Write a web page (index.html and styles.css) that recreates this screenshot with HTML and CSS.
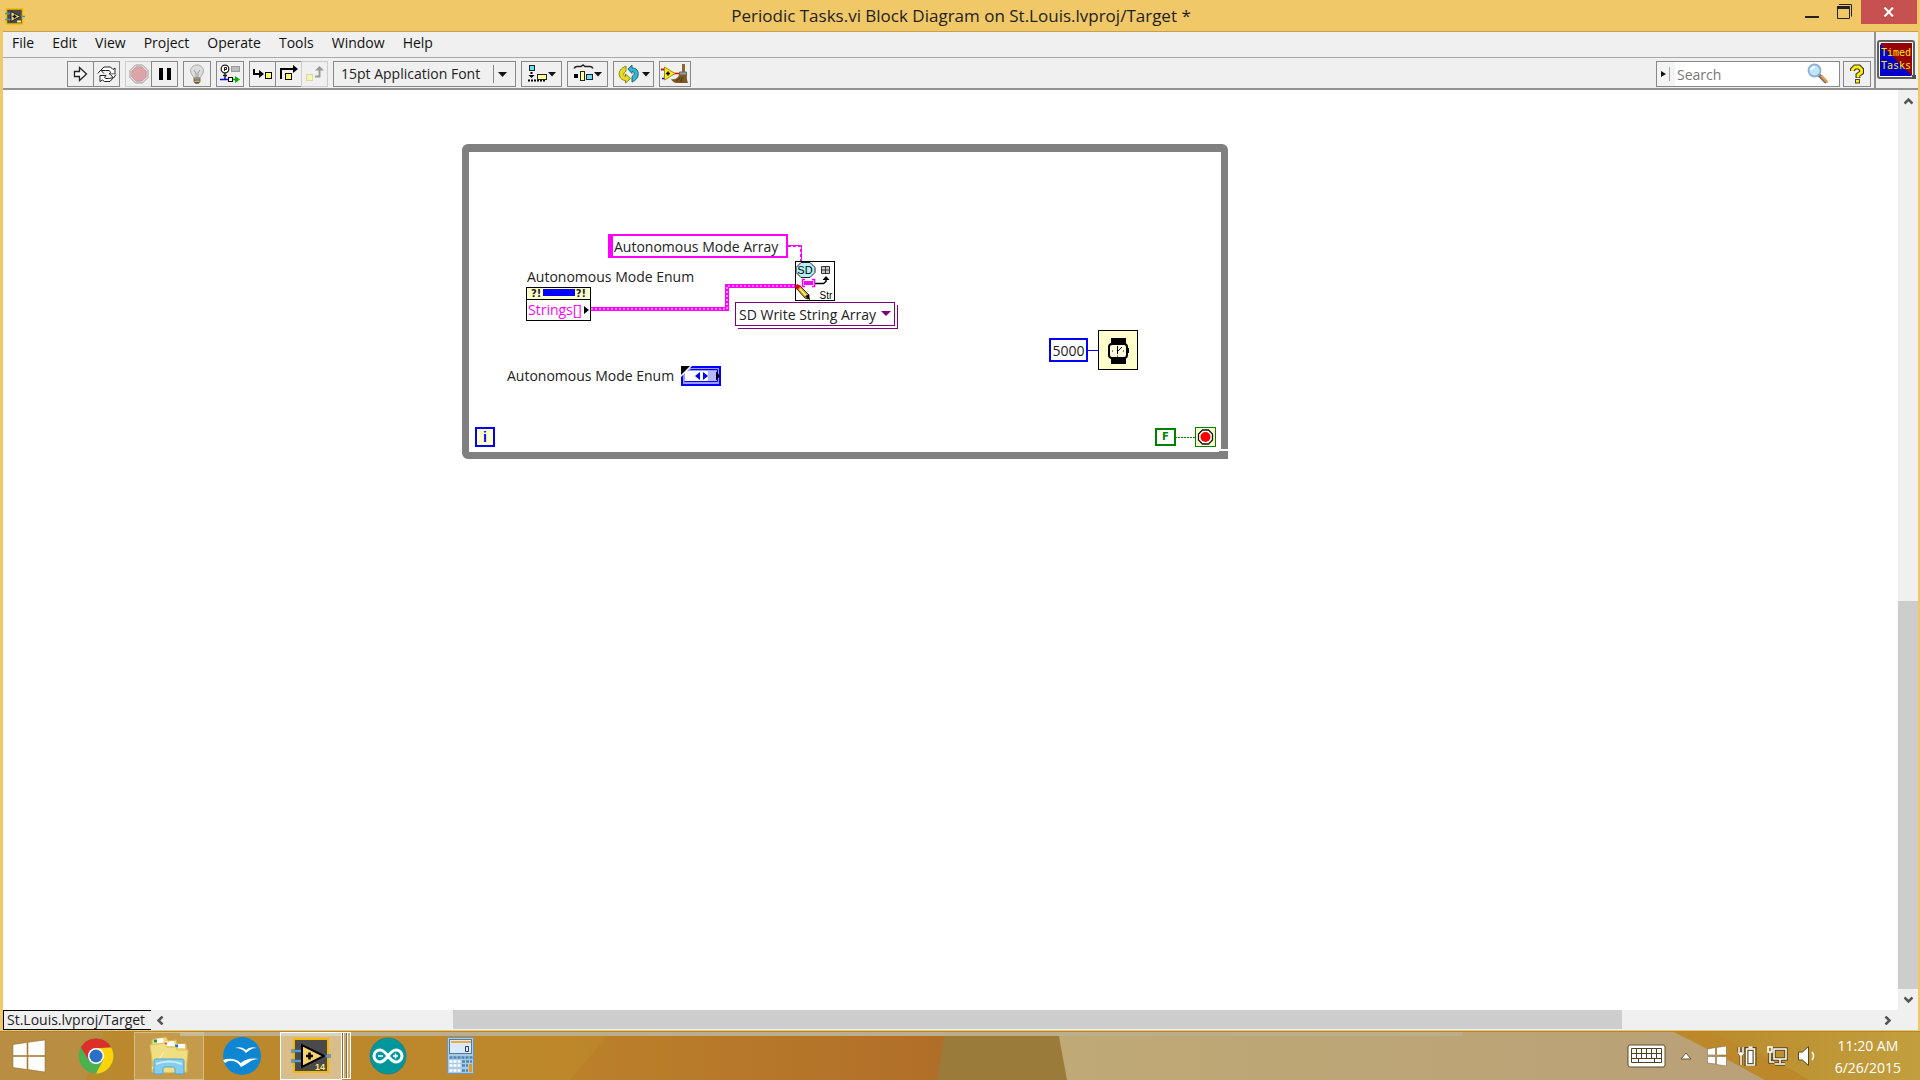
FILE: index.html
```html
<!DOCTYPE html>
<html lang="en">

<head>
    <meta charset="UTF-8">
    <meta name="viewport" content="width=device-width, initial-scale=1.0">
    <title>Periodic Tasks.vi Block Diagram</title>
    <link rel="stylesheet" href="styles.css">
</head>

<body>
    <div class="window">
        <header class="titlebar">
            <svg class="app-icon" width="20" height="18" viewBox="0 0 20 18">
                <rect x="1.5" y="1" width="16" height="15" fill="#4a4a44" stroke="#f5b800" stroke-width="1.5" />
                <path d="M0 5.500h6M0 11.500h6M15 8.500h5" stroke="#4f93b8" stroke-width="1.500" />
                <path d="M6 3.500v10l9.500-5z" fill="#f8d878" stroke="#222" />
                <path d="M7.500 8.500h4M9.500 6.500v4" stroke="#111" stroke-width="1.500" />
                <path d="M12 13.500h4" stroke="#ffe9a0" stroke-width="2" />
            </svg>
            <h1>Periodic Tasks.vi Block Diagram on St.Louis.lvproj/Target *</h1>
            <div class="window-buttons">
                <button type="button" aria-label="Minimize">
                    <svg width="14" height="20"><path d="M0 17h14" stroke="#222" stroke-width="2" /></svg>
                </button>
                <button type="button" aria-label="Restore">
                    <svg width="15" height="20" fill="none" stroke="#222"><path d="M2 4.500h12.500v12" /><path d="M.500 8v10.500h12V8" /><path d="M0 7.500h13" stroke-width="3" /></svg>
                </button>
                <button type="button" class="close" aria-label="Close">
                    <svg width="12" height="10"><path d="M1.500.500l8.500 9M10 .500l-8.500 9" stroke="#fff" stroke-width="2" /></svg>
                </button>
            </div>
        </header>

        <div class="frame">
            <div class="top">
                <div class="bars">
                    <nav class="menubar">
                        <a href="#">File</a>
                        <a href="#">Edit</a>
                        <a href="#">View</a>
                        <a href="#">Project</a>
                        <a href="#">Operate</a>
                        <a href="#">Tools</a>
                        <a href="#">Window</a>
                        <a href="#">Help</a>
                    </nav>

                    <div class="toolbar">
                        <div class="group">
                            <button type="button" class="tool" aria-label="Run">
                                <svg width="16" height="18"><path d="M1.500 6.500h5V2.500l7 6.500-7 6.500v-4h-5z" fill="#fff" stroke="#222" stroke-width="1.300" /></svg>
                            </button>
                            <button type="button" class="tool" aria-label="Run continuously">
                                <svg width="20" height="18" fill="#fff" stroke="#222"><path d="M3.500 5.500L7 2h6.500L16 4.500 18 3v6h-6l1.800-1.800L12 5.500H8.500z" /><path d="M16.500 12.500L13 16.500H7.500L5.500 15 3 16.500v-6h6l-1.500 2 1.500 1h3.500z" /><path d="M.800 8.500L3.800 5l3 3.500M19 9.500l-2.500 3.500-3-3.500" /></svg>
                            </button>
                        </div>
                        <div class="group">
                            <button type="button" class="tool off" aria-label="Abort execution" disabled>
                                <svg width="20" height="20"><path d="M6.500 1h7L19 6.500v7L13.500 19h-7L1 13.500v-7z" fill="#eee" stroke="#999" /><path d="M7 2.800h6L17.200 7v6L13 17.200H7L2.800 13V7z" fill="#dda3a6" stroke="#c79b9d" /></svg>
                            </button>
                            <button type="button" class="tool" aria-label="Pause">
                                <svg width="12" height="14"><path d="M0 1h4v12H0zM8 1h4v12H8z" fill="#000" /></svg>
                            </button>
                        </div>
                        <button type="button" class="tool" aria-label="Highlight execution">
                            <svg width="16" height="20"><path d="M8 1c4 0 6.500 2.700 6.500 6 0 3-2.500 4.500-3.500 7H5C4 11.500 1.500 10 1.500 7 1.500 3.700 4 1 8 1z" fill="#ddd" stroke="#aaa" /><path d="M5 6l2 3v5M11 6L9 9v5" fill="none" stroke="#999" /><path d="M5 14h6v4l-1.500 1.500h-3L5 18z" fill="#d9b660" stroke="#777" /><path d="M5 16h6M6 18.500h4" stroke="#555" /></svg>
                        </button>
                        <button type="button" class="tool" aria-label="Retain wire values">
                            <svg width="20" height="20"><circle cx="5" cy="5" r="3.800" fill="#fff" stroke="#222" stroke-width="1.300" /><path d="M4.500 7V3.500h2v2h-2" fill="none" stroke="#222" /><path d="M5 9v6M3 11.500h4" stroke="#222" stroke-width="1.500" /><rect x="11.500" y="2.500" width="8" height="5" fill="#bbb" stroke="#999" /><path d="M0 15.500h8" stroke="#00f" stroke-width="1.500" /><path d="M12 15.500h4" stroke="#00a000" stroke-width="1.500" /><rect x="8.500" y="13.500" width="4" height="4" fill="#fff" stroke="#000" /><path d="M15 12l5 3.500-5 3.500z" fill="#00b400" /></svg>
                        </button>
                        <div class="group">
                            <button type="button" class="tool" aria-label="Step into">
                                <svg width="20" height="18"><path d="M1 4v5h6" fill="none" stroke="#000" stroke-width="2" /><path d="M6 5l5 4-5 4z" /><rect x="12.500" y="7.500" width="6" height="6" fill="#ffff66" stroke="#000" /></svg>
                            </button>
                            <button type="button" class="tool" aria-label="Step over">
                                <svg width="20" height="18"><path d="M2 14V4h13" fill="none" stroke="#000" stroke-width="2" /><path d="M14 0l5 4-5 4z" /><rect x="6.500" y="8.500" width="6" height="6" fill="#ffff66" stroke="#000" /></svg>
                            </button>
                            <button type="button" class="tool off" aria-label="Step out" disabled>
                                <svg width="20" height="18"><rect x="1.500" y="9.500" width="6" height="6" fill="#f5f5b4" stroke="#ddd8a0" /><path d="M10 11.500h4.500V4" fill="none" stroke="#999" stroke-width="2" /><path d="M10 5.500L14.500 1 19 5.500z" fill="#999" /></svg>
                            </button>
                        </div>
                        <div class="font-picker">
                            <select aria-label="Text settings">
                                <option>15pt Application Font</option>
                            </select>
                            <svg class="arrow" width="16" height="18"><path d="M.500 0v18" stroke="#888" /><path d="M5 7h9l-4.500 5z" fill="#111" /></svg>
                        </div>
                        <button type="button" class="tool wide" aria-label="Align objects">
                            <svg width="30" height="20"><rect x="2.500" y="1.500" width="5" height="5" fill="#66e0ff" stroke="#222" /><path d="M4.500 8v5M1 16.500h17" stroke="#000" stroke-width="2" stroke-dasharray="2 1" /><path d="M1.500 11h6l-3 3z" /><rect x="10.500" y="10.500" width="9" height="5" fill="#ffff99" stroke="#222" /><path d="M21 8h8l-4 4.500z" fill="#111" /></svg>
                        </button>
                        <button type="button" class="tool wide" aria-label="Distribute objects">
                            <svg width="30" height="20"><path d="M1 4.500q1-2 3-2h4l2-1.500 2 1.500h5q2 0 3 2" fill="none" stroke="#222" stroke-width="1.500" /><path d="M1 10h4v4H1z" /><rect x="7.500" y="7.500" width="4" height="9" fill="#ffff99" stroke="#222" /><rect x="13.500" y="10.500" width="6" height="5" fill="#66e0ff" stroke="#222" /><path d="M21 8h8l-4 4.500z" fill="#111" /></svg>
                        </button>
                        <button type="button" class="tool wide reorder" aria-label="Reorder">
                            <svg width="32" height="20"><path d="M8 2C3 4 0 8 1.500 12c1 3 3.500 4.500 6 4.500V19l5-4.500-5-4.500v2.500C5 12 5 9 8 7z" fill="#e6dc22" stroke="#8c8514" /><path d="M14 18c4-1.500 7-5 6-10-.800-3-3-4-6-4V1L10 5l4 4.500V7.500c3 0 3 3 0 5z" fill="#35b5cf" stroke="#17697b" /><path d="M24 8h8l-4 4.500z" fill="#111" /></svg>
                        </button>
                        <button type="button" class="tool cleanup" aria-label="Clean up diagram">
                            <svg width="28" height="20"><path d="M0 5.500h4M1 14.500h3" stroke="#00f" stroke-width="1.500" /><path d="M0 5.500h3M13 9.500h5" stroke="#e00" stroke-width="1.500" /><path d="M3.500 3v13L14 9.500z" fill="#ffec20" stroke="#a09000" /><path d="M5 9.500h4M7 7.500v4" stroke="#000" stroke-width="1.500" /><path d="M21 0h3v8h-3z" fill="#8a6a2c" /><path d="M18.500 8h7v3h-7z" fill="#999" stroke="#666" /><path d="M18 11h8c-.500 3 0 5 1 8H16c-3 0-5-2-6-4 4 1 7-1 8-4z" fill="#7d5a1f" /><path d="M15 17l4-3M20 18l1-5" stroke="#4a330f" /></svg>
                        </button>

                        <div class="search">
                            <svg width="16" height="18"><path d="M4 6v6l5-3z" fill="#111" /><path d="M12.500 2v14" stroke="#aaa" /></svg>
                            <input type="search" placeholder="Search" aria-label="Search">
                            <svg width="22" height="22"><path d="M12 12l7.500 7.500" stroke="#6d6d78" stroke-width="3.500" /><path d="M14 12.500l6.500 7" stroke="#e6994a" stroke-width="2.500" /><circle cx="7.500" cy="7.500" r="6" fill="#bfe6f8" stroke="#8fb0d2" stroke-width="1.800" /><path d="M4 7q1-3 4-3" fill="none" stroke="#fff" stroke-width="2" /></svg>
                        </div>
                        <button type="button" class="tool help" aria-label="Context help">
                            <svg width="16" height="20" fill="none"><path d="M3.500 7V5.500L6 3h4l2.500 2.500v3L9 11v3" stroke="#333" stroke-width="5" /><path d="M3.500 7V5.500L6 3h4l2.500 2.500v3L9 11v2.500" stroke="#fff000" stroke-width="2.800" /><rect x="6.500" y="15.500" width="4" height="3.500" fill="#fff000" stroke="#444" /></svg>
                        </button>
                    </div>
                </div>

                <div class="vi-icon">
                    <svg width="39" height="40">
                        <rect x="1" y="1" width="36" height="37" rx="2" fill="#fff" stroke="#606060" stroke-width="2" />
                        <path d="M4 3h31v32H4z" fill="#960000" />
                        <path d="M3 4l32 32H3z" fill="#0000cd" />
                        <text x="19" y="16">Timed</text>
                        <text x="19" y="29">Tasks</text>
                        <path d="M35 35h4v4h-4z" fill="#505050" />
                    </svg>
                </div>
            </div>

            <div class="work">
                <main class="canvas">
                    <section class="loop">
                        <svg class="wires" width="752" height="300" fill="none">
                            <path d="M319 93.500h13.500V109" stroke="#f0f" />
                            <path d="M319 94.500h12.500V109" stroke="#f0f" stroke-dasharray="3 2" />
                            <path d="M121 157h137v-23h71" stroke="#f0f" stroke-width="4" />
                            <path d="M122 157h136v-23h70" stroke="#fff" stroke-width="1" stroke-dasharray="2 2" />
                            <path d="M619 198.500h10" stroke="#00f" stroke-width="1" />
                            <path d="M706 285.500h20" stroke="#008000" stroke-dasharray="2 1" />
                        </svg>

                        <input class="node string-const" value="Autonomous Mode Array" aria-label="String constant">

                        <div class="node property">
                            <span class="caption">Autonomous Mode Enum</span>
                            <div class="property-box">
                                <div class="property-head"><b>?!</b><i></i><b>?!</b></div>
                                <div class="property-item">Strings[]<svg width="5" height="8"><path d="M0 0v8l5-4z" /></svg></div>
                            </div>
                        </div>

                        <svg class="node sd-icon" width="40" height="40">
                            <rect x=".500" y=".500" width="39" height="39" fill="#fff" stroke="#000" />
                            <path d="M6 1.500h9l5 5v5l-5 5H6l-5-5v-5z" fill="#b5f0f8" stroke="#222" />
                            <text x="10" y="13" text-anchor="middle" class="sd">SD</text>
                            <path d="M26.500 5.500h8v7h-8zM30.500 5v8M26 9h9" fill="#ccc" stroke="#333" />
                            <path d="M10 18.500H7.500v7H10M17 18.500h2.500v7H17" fill="none" stroke="#f0f" stroke-width="1.500" />
                            <path d="M9 20h9v4H9z" fill="#f0f" />
                            <path d="M20 22.500h8.500l2.500-2v-3" fill="none" stroke="#000" stroke-width="1.500" />
                            <path d="M27.500 19l3.500-4 3.500 4z" />
                            <path d="M5 25l9 9-1 4-3-1-8-9z" fill="#d8a820" stroke="#3a2400" />
                            <path d="M5 28l7 8" stroke="#fff080" stroke-width="1.500" />
                            <path d="M2 23l4 2-4 4-2-3z" fill="#e00000" />
                            <path d="M10 35l5 4.500-1-6z" />
                            <text x="31" y="38" text-anchor="middle" class="str">Str</text>
                        </svg>

                        <div class="node selector">
                            <select aria-label="Polymorphic instance">
                                <option>SD Write String Array</option>
                            </select>
                            <svg class="arrow" width="10" height="6"><path d="M0 0h10L5 5z" fill="#800080" /></svg>
                        </div>

                        <div class="node enum">
                            <span class="caption">Autonomous Mode Enum</span>
                            <svg width="40" height="20">
                                <path d="M1 1h38v18H1z" fill="#9a9aff" stroke="#00f" stroke-width="2" />
                                <path d="M4 5h23v10H4z" fill="#fff" />
                                <path d="M3.500 15.500h33v-12h-27" fill="none" stroke="#00f" />
                                <path d="M27 5h8v10h-8z" fill="#b8b8ff" />
                                <path d="M19 6v8l-5-4zM22 6v8l5-4z" fill="#00f" />
                                <path d="M35 5.500v9l4-4.500z" />
                                <path d="M0 0h11L0 11z" fill="#fff" />
                                <path d="M0 0h9L0 9z" />
                            </svg>
                        </div>

                        <div class="node iteration">i</div>

                        <input class="node number-const" value="5000" aria-label="Milliseconds">
                        <svg class="node timer" width="40" height="40">
                            <rect x=".500" y=".500" width="39" height="39" fill="#ffffcc" stroke="#000" />
                            <path d="M13 8h15v6H13zM13 28h15v6H13z" />
                            <rect x="11" y="14" width="18" height="14" rx="3" fill="#ffffe0" stroke="#000" stroke-width="2" />
                            <path d="M29 18h2v5h-2z" />
                            <path d="M19.500 16v8M20 21l4-4" stroke="#000" />
                            <path d="M14 21h1M25 21h1M19 26h1" stroke="#000" stroke-width="1" />
                        </svg>

                        <button type="button" class="node false-const">F</button>
                        <svg class="node stop" width="21" height="20">
                            <rect x=".500" y=".500" width="20" height="19" fill="#ffffcc" stroke="#008000" />
                            <path d="M7.500 3h6l4 4v6l-4 4h-6l-4-4V7z" fill="#fff" stroke="#111" stroke-width="1.300" />
                            <circle cx="10.500" cy="10" r="5" fill="#f00" />
                        </svg>
                        <span class="resize"></span>
                    </section>
                </main>
                <div class="vscroll">
                    <svg width="9" height="8"><path d="M.500 6.500l4-4 4 4" fill="none" stroke="#555" stroke-width="2.500" /></svg>
                    <div class="vtrack"><div class="vthumb"></div></div>
                    <svg width="9" height="8"><path d="M.500 1.500l4 4 4-4" fill="none" stroke="#555" stroke-width="2.500" /></svg>
                </div>
            </div>

            <div class="bottom">
                <button type="button" class="target">St.Louis.lvproj/Target</button>
                <div class="hscroll">
                    <svg width="8" height="9"><path d="M6.500.500l-4 4 4 4" fill="none" stroke="#555" stroke-width="2.500" /></svg>
                    <div class="htrack"><div class="hthumb"></div></div>
                    <svg width="8" height="9"><path d="M1.500.500l4 4-4 4" fill="none" stroke="#555" stroke-width="2.500" /></svg>
                </div>
            </div>
        </div>
    </div>

    <footer class="taskbar">
        <svg class="wallpaper" viewBox="0 0 1920 49" preserveAspectRatio="none">
            <defs>
                <linearGradient id="sand"><stop offset="0" stop-color="#b98a2e" /><stop offset=".600" stop-color="#bd872a" /><stop offset="1" stop-color="#ad6c28" /></linearGradient>
                <linearGradient id="pale"><stop offset="0" stop-color="#bfa975" /><stop offset="1" stop-color="#b9a078" /></linearGradient>
                <linearGradient id="gold"><stop offset="0" stop-color="#b8882a" /><stop offset="1" stop-color="#c29f3e" /></linearGradient>
            </defs>
            <path d="M0 0h945v49H0z" fill="url(#sand)" />
            <path d="M0 0h104L86 49H0z" fill="#b98e42" />
            <path d="M612 0h334v49H570z" fill="#b8752a" opacity=".300" />
            <path d="M945 0h114l9 49H937z" fill="#9b7b3a" />
            <path d="M1058 0h655l80 49H1067z" fill="url(#pale)" />
            <path d="M1672 0h248v49h-155q-50-28-93-49z" fill="url(#gold)" />
            <path d="M1672 0h32q70 26 105 49h-44q-50-28-93-49z" fill="#bd8829" />
            <path d="M180 0h1282v5H180z" fill="#bcae8c" />
            <path d="M0 .500h1920" stroke="#a8873e" />
        </svg>

        <nav class="apps">
            <button type="button" class="app start" aria-label="Start">
                <svg width="34" height="34" fill="#fff" stroke="#8a6420" stroke-width=".500"><path d="M1 5.500l14-2v13H1zM16 3.300L33 1v15.500H16zM1 17.500h14v13l-14-2zM16 17.500h17V33l-17-2.500z" /></svg>
            </button>
            <button type="button" class="app" aria-label="Chrome">
                <svg width="36" height="36">
                    <circle cx="18" cy="18" r="17.500" fill="#4caf50" />
                    <path d="M2.800 9.300A17.500 17.500 0 0 1 33.200 9.500L18 10.500l-7.500 11z" fill="#dc2f28" />
                    <path d="M33.200 9.500A17.500 17.500 0 0 1 18 35.500l7.500-14L18 10.300z" fill="#fdd20a" />
                    <circle cx="18" cy="18" r="8" fill="#fff" />
                    <circle cx="18" cy="18" r="6.500" fill="#2a6fc4" />
                </svg>
            </button>
            <button type="button" class="app open" aria-label="File Explorer">
                <svg width="40" height="40">
                    <path d="M3 4l14-3 2 4 8-1 1 4h9l1 28H3z" fill="#efd978" stroke="#d8b850" />
                    <path d="M5 3l9-1 1 5H5zM15 6l10-1 1 5H15zM26 8h10v4H26z" fill="#fff" />
                    <path d="M5 3.500h3v3H5z" fill="#169b3b" /><path d="M15 6.500h3v2h-3z" fill="#e64a19" /><path d="M26 8.500h3v3h-3z" fill="#1976d2" />
                    <path d="M1 9l14-2 3 4h9l1 3h11l-2 22-32 1z" fill="#f0df82" stroke="#dcc25a" />
                    <path d="M3 33L15 16M6 25h12" stroke="#fff8c8" stroke-width="1" />
                    <path d="M5 38V25q0-2 2-2h26q2 0 2 2v13h-9v-5q0-2-2-2h-8q-2 0-2 2v5z" fill="#84cdee" stroke="#55a5cf" />
                    <path d="M7 28q13-5 26 0" fill="none" stroke="#c9ecfb" stroke-width="2" />
                </svg>
            </button>
            <button type="button" class="app" aria-label="OpenOffice">
                <svg width="38" height="38">
                    <circle cx="19" cy="19" r="19" fill="#0f86d2" />
                    <path d="M12 11q7-2 11 2 4-4 11-2-5 0-7 2-2 1-4 3-4-5-11-5zM0 23q5-2 10-1 5 1 8 4 6-6 18-4-7 0-11 4-3 2-7 4-3-5-8-6-4-1-8 2z" fill="#fff" />
                </svg>
            </button>
            <button type="button" class="app active" aria-label="LabVIEW">
                <svg width="40" height="36">
                    <rect x="3" y="1" width="34" height="33" fill="#4a4a4a" stroke="#f5b800" stroke-width="2" />
                    <path d="M0 13h11M0 23h11M33 18h7" stroke="#2e6f9e" stroke-width="3" /><path d="M0 13h11M0 23h11M33 18h7" stroke="#8cc4e4" />
                    <path d="M11 7v22l22-11z" fill="#fbd36b" stroke="#000" stroke-width="2" />
                    <path d="M15 18h7M18.500 14.500v7" stroke="#000" stroke-width="2.500" />
                    <text x="29" y="32" text-anchor="middle">14</text>
                </svg>
            </button>
            <span class="stack"></span>
            <button type="button" class="app" aria-label="Arduino">
                <svg width="38" height="38" fill="none" stroke="#fff">
                    <circle cx="19" cy="19" r="18" fill="#00979c" stroke="#2c8084" />
                    <path d="M19 19c-3-4-5-6-8-6a6 6 0 0 0 0 12c3 0 5-2 8-6s5-6 8-6a6 6 0 0 1 0 12c-3 0-5-2-8-6z" stroke-width="3" />
                    <path d="M9 19h5M24 19h5M26.500 16.500v5" stroke-width="1.500" />
                </svg>
            </button>
            <button type="button" class="app" aria-label="Calculator">
                <svg width="30" height="40">
                    <rect x="1.500" y="1.500" width="26" height="36" rx="1" fill="#a9cbe8" stroke="#6a96c2" />
                    <rect x="3.500" y="3.500" width="22" height="14" fill="#d9ebfa" stroke="#56789a" />
                    <path d="M5 6h20" stroke="#f3a73a" stroke-width="2" />
                    <path d="M19.500 10.500h3v5h-3z" fill="none" stroke="#333a60" />
                    <path d="M3.500 21.500h23M16 25.500h10M16 29.500h6M16 34.500h6" stroke="#4d86b0" stroke-width="2.500" stroke-dasharray="3 1" />
                    <path d="M3.500 25.500h12M3.500 29.500h12M3.500 34.500h12" stroke="#fff" stroke-width="2.500" stroke-dasharray="3 1" />
                    <path d="M23 28h3v8h-3z" fill="#ee9418" />
                </svg>
            </button>
        </nav>

        <div class="tray">
            <svg width="39" height="24"><rect x="1" y="1" width="37" height="22" rx="2" fill="#fff" stroke="#5f4d26" /><path d="M4.500 4.500h30v14h-30zM4.500 9.500h30M4.500 14.500h30M9.500 4.500v10M14.500 4.500v10M19.500 4.500v10M24.500 4.500v10M29.500 4.500v10M11.500 14v5M27.500 14v5" fill="none" stroke="#4e4020" /></svg>
            <svg class="up" width="12" height="8"><path d="M1 7l5-6 5 6z" fill="#fff" stroke="#6b562a" /></svg>
            <svg class="flag" width="20" height="20" fill="#fff" stroke="#7a5c20" stroke-width=".500"><path d="M.500 3l8-1.500V9h-8zM9.500 1.500l10-1.500v9h-10zM.500 10.500h8V18l-8-1zM9.500 10.500h10V20l-10-1.500z" /></svg>
            <svg width="20" height="20" fill="none"><path d="M2 1v5M6 1v5M1 7h6M4 8v11" stroke="#5a451c" stroke-width="3" /><path d="M9.500 3h8v16h-8z" stroke="#5a451c" stroke-width="4" /><path d="M2 1v5M6 1v5M1 7h6M2 8.500h4M4 8v11" stroke="#fff" stroke-width="1.500" /><path d="M9.500 3h8v16h-8z" fill="#6b5224" stroke="#fff" stroke-width="1.500" /><path d="M11.500.500h4v2h-4zM11.500 5h4v12h-4z" fill="#fff" /></svg>
            <svg width="21" height="20" fill="none"><path d="M7 3h12v10H7zM3 6v10h4M13 13v4M8 18h10" stroke="#5a451c" stroke-width="3.500" /><path d="M7 3h12v10H7zM3 6v10h4M13 13v4M8 18h10" stroke="#fff" stroke-width="1.500" /><path d="M1 1h4v5H1z" fill="#a9803a" stroke="#fff" stroke-width="1.500" /></svg>
            <svg width="18" height="20"><path d="M.500 6h4l6-5.500v19L4.500 14h-4z" fill="#fff" stroke="#5a451c" /><path d="M14 6q3 4 0 8" fill="none" stroke="#fff" stroke-width="1.500" /></svg>
            <div class="clock">
                <span>11:20 AM</span>
                <span>6/26/2015</span>
            </div>
        </div>
    </footer>
</body>

</html>
```

FILE: styles.css
```css
* {
    box-sizing: border-box;
}

body {
    margin: 0;
    height: 100vh;
    display: flex;
    flex-direction: column;
    font-family: "Open Sans", "Noto Sans", sans-serif;
    font-size: 14px;
    color: #222;
    overflow: hidden;
}

svg {
    display: block;
    flex: none;
}

button,
input,
select {
    font: inherit;
    color: inherit;
    margin: 0;
    padding: 0;
    border: 0;
    border-radius: 0;
    background: none;
    outline: none;
}

select {
    appearance: none;
}

/* window */
.window {
    flex: 1;
    min-height: 0;
    display: flex;
    flex-direction: column;
    background: #f0c868;
}

.titlebar {
    display: grid;
    grid-template-columns: 1fr auto 1fr;
    height: 31px;
    padding: 0 3px 0 5px;
}

.app-icon {
    margin-top: 8px;
}

.titlebar h1 {
    margin: 0;
    font-size: 17px;
    font-weight: 400;
    line-height: 32px;
}

.window-buttons {
    display: flex;
    justify-content: flex-end;
    align-items: flex-start;
    gap: 18px;
}

.window-buttons .close {
    display: flex;
    align-items: center;
    justify-content: center;
    width: 56px;
    height: 24px;
    margin-left: -9px;
    background: #c75050;
}

.frame {
    flex: 1;
    min-height: 0;
    display: flex;
    flex-direction: column;
    margin: 0 2px 0 3px;
    border-top: 1px solid #c8a04c;
    border-bottom: 1px solid #f0c868;
    background: #fff;
}

.top {
    display: flex;
    height: 58px;
    background: #f0f0f0;
    border-bottom: 2px solid #929292;
}

.bars {
    flex: 1;
    border-right: 2px solid #929292;
}

.menubar {
    display: flex;
    gap: 18px;
    height: 26px;
    padding-left: 9px;
    line-height: 22px;
    border-bottom: 1px solid #a8a8a8;
}

.menubar a {
    color: #111;
    text-decoration: none;
}

.toolbar {
    display: flex;
    align-items: center;
    gap: 5px;
    height: 31px;
    padding: 1px 3px 0 64px;
}

.group {
    display: flex;
}

.tool {
    display: flex;
    align-items: center;
    justify-content: center;
    width: 28px;
    height: 26px;
    border: 1px solid #888;
}

.group .tool {
    width: 27px;
}

.group .tool + .tool {
    margin-left: -1px;
}

.tool.off {
    border-color: #ccc;
}

.tool.wide {
    width: 41px;
}

.tool.cleanup {
    width: 32px;
}

.tool.help {
    margin-left: -2px;
}

.font-picker {
    position: relative;
}

.font-picker select {
    width: 183px;
    height: 26px;
    padding: 0 7px 2px;
    border: 1px solid #888;
}

.font-picker .arrow {
    position: absolute;
    top: 4px;
    right: 7px;
}

.search {
    display: flex;
    align-items: center;
    width: 184px;
    height: 26px;
    margin-left: auto;
    padding-right: 10px;
    border: 1px solid #888;
    background: linear-gradient(to right, #f4f4f4 18px, #fff 18px);
}

.search input {
    flex: 1;
    min-width: 0;
    padding-left: 4px;
    appearance: none;
}

.search input::placeholder {
    color: #777;
}

.vi-icon {
    padding: 8px 2px 0 1px;
}

.vi-icon text {
    fill: #ffe600;
    font: 10px "DejaVu Sans Mono", monospace;
    text-anchor: middle;
}

/* block diagram */
.work {
    flex: 1;
    min-height: 0;
    display: flex;
}

.canvas {
    flex: 1;
    position: relative;
    background: #fff;
    overflow: hidden;
}

.loop {
    position: absolute;
    left: 459px;
    top: 54px;
    width: 766px;
    height: 315px;
    border: 7px solid #808080;
    border-top-width: 8px;
    border-radius: 6px;
}

.node {
    position: absolute;
}

.wires {
    position: absolute;
    left: 0;
    top: 0;
}

.string-const {
    left: 139px;
    top: 82px;
    width: 180px;
    height: 24px;
    padding-left: 1px;
    border: 2px solid #f0f;
    border-left-width: 5px;
}

.property {
    left: 57px;
    top: 115px;
}

.caption {
    display: block;
    line-height: 20px;
    white-space: nowrap;
}

.property .caption {
    padding-left: 1px;
}

.property-box {
    width: 65px;
    height: 34px;
    border: 1px solid #000;
}

.property-head {
    display: flex;
    justify-content: space-between;
    height: 12px;
    padding: 1px 4px;
    background: #ffffcc;
    border-bottom: 1px solid #000;
}

.property-head b {
    font: bold 10px/10px "DejaVu Sans", sans-serif;
}

.property-head i {
    width: 32px;
    height: 7px;
    background: #00f;
}

.property-item {
    display: flex;
    align-items: center;
    justify-content: space-between;
    padding: 0 1px;
    line-height: 20px;
    color: #f0f;
}

.sd-icon {
    left: 326px;
    top: 109px;
}

.sd-icon text {
    font: 11px "Liberation Sans", sans-serif;
}

.sd-icon .str {
    font-size: 10px;
}

.selector {
    left: 266px;
    top: 150px;
    width: 160px;
    height: 24px;
    border: 1px solid #800080;
    background: #fff;
    box-shadow: 2px 2px 0 #fff, 3px 3px 0 #800080;
}

.selector select {
    width: 100%;
    height: 22px;
    padding: 0 3px;
}

.selector .arrow {
    position: absolute;
    top: 8px;
    right: 3px;
}

.enum {
    left: 38px;
    top: 214px;
    display: flex;
    gap: 7px;
}

.iteration {
    left: 6px;
    top: 275px;
    width: 20px;
    height: 20px;
    border: 2px solid #00f;
    background: #ffffcc;
    color: #00f;
    font: bold 14px/16px "Liberation Sans", sans-serif;
    text-align: center;
}

.number-const {
    left: 580px;
    top: 186px;
    width: 39px;
    height: 24px;
    border: 2px solid #00f;
    text-align: center;
}

.timer {
    left: 629px;
    top: 178px;
}

.false-const {
    left: 686px;
    top: 276px;
    width: 21px;
    height: 18px;
    border: 2px solid #008000;
    color: #008000;
    font: bold 10px/14px "DejaVu Sans", sans-serif;
}

.stop {
    left: 726px;
    top: 275px;
}

.resize {
    position: absolute;
    right: -7px;
    bottom: -7px;
    width: 9px;
    height: 10px;
    background: #808080;
    border-top: 2px solid #fff;
}

/* scrollbars */
.vscroll {
    display: flex;
    flex-direction: column;
    align-items: center;
    width: 20px;
    padding: 7px 0 6px;
    background: #f0f0f0;
}

.vtrack {
    flex: 1;
    display: grid;
    grid-template-rows: 490fr 389fr;
    width: 100%;
    padding: 7px 0;
}

.vthumb {
    grid-row: 2;
    background: #cdcdcd;
}

.bottom {
    display: flex;
    height: 20px;
    background: #f0f0f0;
}

.target {
    width: 148px;
    border: 1px solid #000;
    border-right: 0;
    padding: 0 3px;
    line-height: 16px;
    text-align: left;
    white-space: nowrap;
}

.hscroll {
    flex: 1;
    display: flex;
    align-items: center;
    padding: 0 26px 0 5px;
}

.htrack {
    flex: 1;
    display: grid;
    grid-template-columns: 281fr 1168fr 254fr;
    height: 20px;
    padding: 0 8px;
}

.hthumb {
    grid-column: 2;
    height: 19px;
    background: #cdcdcd;
}

/* taskbar */
.taskbar {
    position: relative;
    display: flex;
    justify-content: space-between;
    height: 49px;
}

.wallpaper {
    position: absolute;
    width: 100%;
    height: 100%;
}

.apps,
.tray {
    position: relative;
    display: flex;
    align-items: center;
}

.app {
    display: flex;
    align-items: center;
    justify-content: center;
    width: 70px;
    height: 48px;
    margin-right: 3px;
}

.app.start {
    width: 58px;
}

.app.open {
    border: 1px solid #d6bd88;
    background: rgba(255, 255, 255, 0.15);
}

.app.active {
    width: 62px;
    margin-right: 0;
    border: 1px solid #fff;
    background: rgba(255, 255, 255, 0.45);
}

.app.active text {
    fill: #ffe680;
    font: bold 9px "Liberation Sans", sans-serif;
}

.stack {
    width: 9px;
    height: 47px;
    margin-right: 2px;
    border: solid #fff;
    border-width: 1px 1px 1px 0;
    background: repeating-linear-gradient(to right, #8a6a30 0 1px, #fff 1px 2px, #c9ac78 2px 4px);
}

.tray {
    gap: 10px;
    padding-right: 19px;
}

.tray .up {
    margin: 0 5px 0 4px;
}

.clock {
    display: flex;
    flex-direction: column;
    align-items: center;
    margin-left: 9px;
    padding-top: 3px;
    line-height: 22px;
    color: #fff;
}
```
